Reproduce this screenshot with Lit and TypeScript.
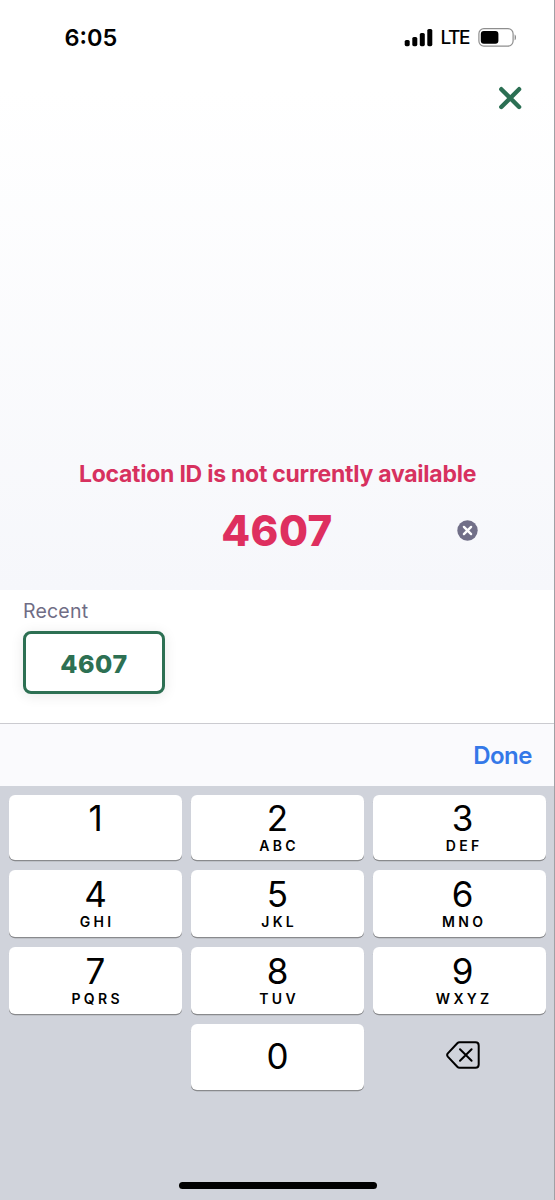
import { LitElement, html, css, svg } from "lit";
import { customElement, property } from "lit/decorators.js";

@customElement("status-bar")
class StatusBar extends LitElement {
  static styles = css`
    :host { display: flex; height: 74px; box-sizing: border-box; padding: 0 38px 0 64.5px; align-items: center; justify-content: space-between; }
    .time { font-size: 23.5px; font-weight: 600; line-height: 30px; padding-top: 1px; }
    .right { display: flex; align-items: center; }
    .lte { font-size: 19px; font-weight: 500; line-height: 24px; letter-spacing: -1.4px; margin: 0 9px 0 7px; padding-top: 1px; }
    svg { display: block; }
  `;
  render() {
    return html`
      <span class="time">6:05</span>
      <div class="right">
        <svg width="29" height="19" viewBox="0 0 29 19">
          <rect x="0.7" y="12" width="5" height="6.2" rx="1.6" />
          <rect x="8.3" y="9" width="5" height="9.2" rx="1.6" />
          <rect x="15.8" y="5" width="5" height="13.2" rx="1.6" />
          <rect x="23.3" y="1" width="5" height="17.2" rx="1.6" />
        </svg>
        <span class="lte">LTE</span>
        <svg width="38" height="19" viewBox="0 0 38 19">
          <rect x="0.9" y="0.7" width="34.2" height="17.4" rx="5" fill="none" stroke="#8e8e8e" stroke-width="1.2" />
          <rect x="2.8" y="2.9" width="17.6" height="12.9" rx="3" />
          <path d="M36.6 6.5c1.9.8 1.9 5 0 5.800z" fill="#8e8e8e" />
        </svg>
      </div>
    `;
  }
}

@customElement("pad-key")
class PadKey extends LitElement {
  @property() digit = "";
  @property() letters = "";
  @property({ type: Boolean }) single = false;
  static styles = css`
    :host { display: flex; flex-direction: column; align-items: center; justify-content: center; box-sizing: border-box; padding-bottom: 4px; border-radius: 6px; background: #fff; box-shadow: 0 1.3px 0 #898a8d; }
    :host([single]) { padding: 11.5px 0 0; justify-content: flex-start; }
    .digit { font-size: 35px; line-height: 41px; font-weight: 400; }
    .letters { height: 14px; font-size: 14px; line-height: 14px; font-weight: 600; letter-spacing: 3.3px; margin-right: -3.3px; }
  `;
  render() {
    return html`<span class="digit">${this.digit}</span><span class="letters">${this.letters}</span>`;
  }
}

const KEYS = [
  ["1", ""], ["2", "ABC"], ["3", "DEF"],
  ["4", "GHI"], ["5", "JKL"], ["6", "MNO"],
  ["7", "PQRS"], ["8", "TUV"], ["9", "WXYZ"],
];

const cross = svg`<path d="M6.700 6.700l7 7m0-7l-7 7" stroke="#fff" stroke-width="2.300" stroke-linecap="round" />`;

@customElement("app-root")
class AppRoot extends LitElement {
  static styles = css`
    :host { display: flex; flex-direction: column; box-sizing: border-box; width: 555px; height: 1200px; overflow: hidden; border-right: 1px solid #a0a0a5; font-family: Inter, "Liberation Sans", sans-serif; color: #000; background: #fff; }
    svg { display: block; }
    .entry { height: 590px; display: flex; flex-direction: column; background: linear-gradient(#fff 15%, #f6f7fb 100%); }
    .close { align-self: flex-end; margin: 12px 32px 0 0; }
    .error { margin-top: 348px; padding-left: 1px; text-align: center; color: #d7315f; font-size: 23px; line-height: 32px; font-weight: 700; letter-spacing: -0.25px; white-space: nowrap; }
    .field { display: grid; grid-template-columns: 1fr auto 1fr; align-items: center; margin-top: 15px; height: 52px; }
    .value { grid-column: 2; color: #de2f5f; font-size: 42px; line-height: 52px; font-weight: 800; letter-spacing: 0.5px; }
    .clear { justify-self: end; margin: -2px 76px 0 0; }
    .recent { height: 133px; box-sizing: border-box; padding: 9px 0 0 23px; }
    .label { color: #706d85; font-size: 19.5px; line-height: 24px; letter-spacing: 0.2px; }
    .chip { display: flex; align-items: center; justify-content: center; box-sizing: border-box; width: 142px; height: 63px; margin-top: 8px; padding-top: 2px; border: 3px solid #2d7053; border-radius: 8px; box-shadow: 0 2px 14px rgba(0, 0, 0, 0.09); color: #2d7053; background: #fff; font-size: 25px; font-weight: 800; letter-spacing: 0.5px; }
    .toolbar { height: 63px; box-sizing: border-box; border-top: 1px solid #cbcbd0; padding: 0 22px 0 0; display: flex; align-items: center; justify-content: flex-end; background: #fafafd; color: #3478e8; font-size: 24px; font-weight: 600; letter-spacing: -0.5px; }
    .keyboard { flex: 1; box-sizing: border-box; display: flex; flex-direction: column; align-items: center; justify-content: space-between; padding: 8.5px 8px 11.5px 9px; background: #d0d3db; }
    .keys { align-self: stretch; display: grid; grid-template-columns: repeat(3, 1fr); grid-template-rows: 65.5px 67px 67px 65.5px; gap: 10px 9px; }
    .keys > :nth-child(3n):not(.delete) { padding-left: 6px; }
    .zero { grid-column: 2; }
    .delete { display: flex; align-items: center; justify-content: center; padding-left: 6px; padding-bottom: 3px; }
    .home { width: 198px; height: 7px; border-radius: 4px; background: #000; }
  `;
  render() {
    return html`
      <div class="entry">
        <status-bar></status-bar>
        <svg class="close" width="24" height="24" viewBox="0 0 24 24">
          <path d="M3.300 3.200l17.800 17.800m0-17.800l-17.800 17.800" fill="none" stroke="#2b6f53" stroke-width="4.400" stroke-linecap="round" />
        </svg>
        <div class="error">Location ID is not currently available</div>
        <div class="field">
          <span class="value">4607</span>
          <svg class="clear" width="21" height="21" viewBox="0 0 20.400 20.400">
            <circle cx="10.200" cy="10.200" r="9.900" fill="#716f88" />${cross}
          </svg>
        </div>
      </div>
      <div class="recent">
        <div class="label">Recent</div>
        <div class="chip">4607</div>
      </div>
      <div class="toolbar"><span>Done</span></div>
      <div class="keyboard">
        <div class="keys">
          ${KEYS.map(([d, l]) => html`<pad-key digit=${d} letters=${l}></pad-key>`)}
          <pad-key class="zero" digit="0" single></pad-key>
          <div class="delete">
            <svg width="34" height="28" viewBox="0 0 34 28" fill="none" stroke="#000" stroke-width="2" stroke-linejoin="round" stroke-linecap="round">
              <path d="M13.500 1.200H29.500Q32.700 1.200 32.700 4.400V23.600Q32.700 26.800 29.500 26.800H13.500Q12.300 26.800 11.300 25.800L1.800 15.600Q.5 14 1.800 12.400L11.300 2.200Q12.300 1.200 13.500 1.200Z" />
              <path d="M14 8.200l11.600 11.600m0-11.600l-11.600 11.600" />
            </svg>
          </div>
        </div>
        <div class="home"></div>
      </div>
    `;
  }
}
